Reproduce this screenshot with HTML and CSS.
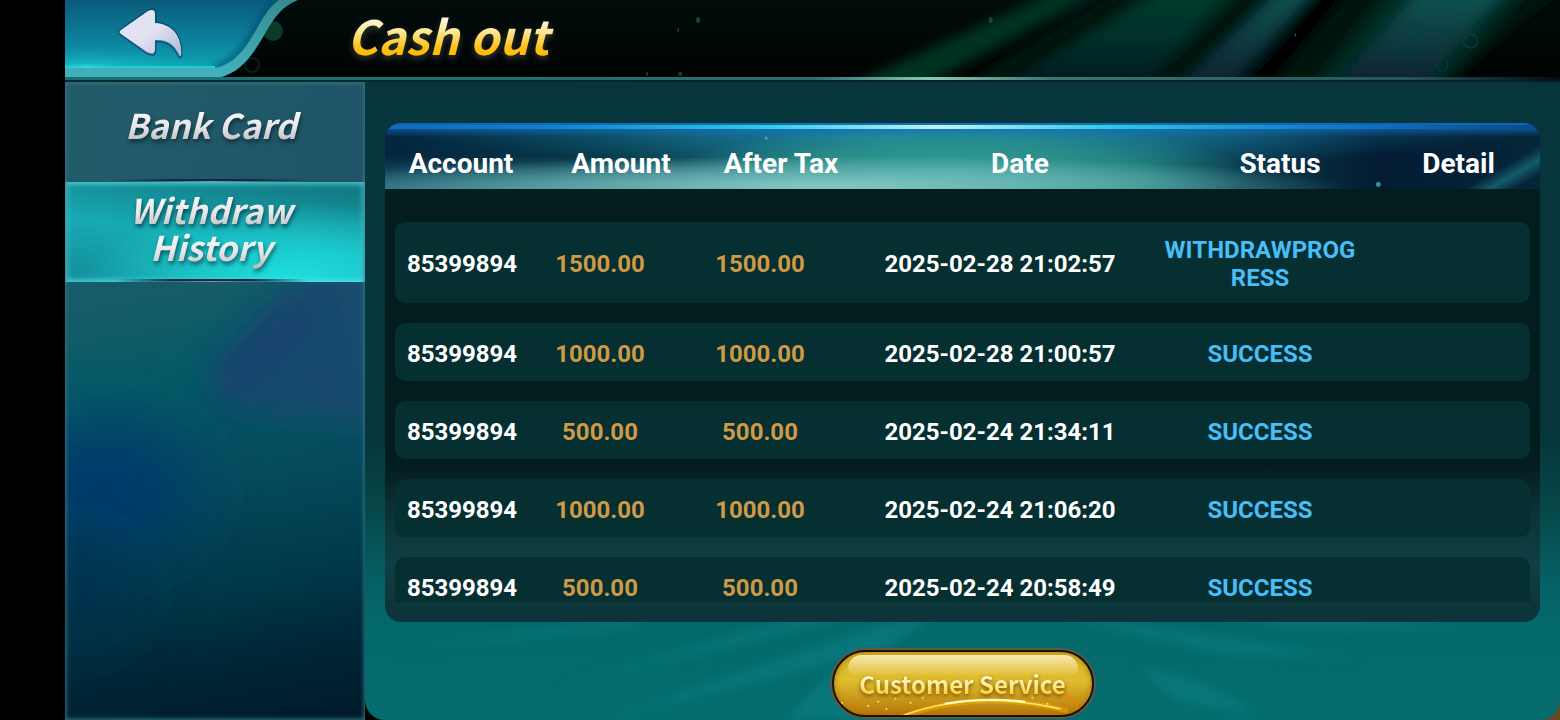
FILE: index.html
```
<!DOCTYPE html>
<html lang="en">
<head>
    <meta charset="UTF-8">
    <meta name="viewport" content="width=device-width, initial-scale=1.0">
    <title>Cash out</title>
    <link rel="stylesheet" href="styles.css">
</head>
<body>
    <header class="topbar">
        <svg class="rays" viewBox="0 0 940 78" preserveAspectRatio="none" aria-hidden="true">
            <defs>
                <filter id="soft" x="-20%" y="-20%" width="140%" height="140%"><feGaussianBlur stdDeviation="9 4"/></filter>
                <linearGradient id="ray" x1="0" y1="0" x2="0" y2="1">
                    <stop offset="0" stop-color="#053a2c"/>
                    <stop offset=".5" stop-color="#053029"/>
                    <stop offset="1" stop-color="#041820"/>
                </linearGradient>
                <linearGradient id="rayBlue" x1="0" y1="0" x2="0" y2="1">
                    <stop offset="0" stop-color="#0c5654"/>
                    <stop offset="1" stop-color="#07202f"/>
                </linearGradient>
            </defs>
            <g filter="url(#soft)">
                <polygon points="500,-10 940,-10 820,88 340,88" fill="#02140f"/>
                <polygon points="440,-10 484,-10 300,88 225,88" fill="#043020"/>
                <polygon points="540,-10 618,-10 520,88 385,88" fill="url(#ray)"/>
                <polygon points="662,-10 694,-10 608,88 558,88" fill="url(#rayBlue)"/>
                <polygon points="698,-10 730,-10 650,88 620,88" fill="#000605"/>
                <polygon points="770,-10 905,-10 820,88 695,88" fill="#042a24"/>
                <polygon points="800,-10 885,-10 800,88 715,88" fill="url(#rayBlue)"/>
            </g>
            <g fill="#0e4a35">
                <ellipse cx="80" cy="20" rx="2" ry="3"/>
                <ellipse cx="60" cy="30" rx="1" ry="2"/>
                <ellipse cx="372" cy="20" rx="2" ry="3"/>
                <ellipse cx="29" cy="74" rx="1" ry="2"/>
                <ellipse cx="62" cy="74" rx="2" ry="2"/>
                <ellipse cx="676" cy="35" rx="1" ry="2"/>
            </g>
            <g fill="none" stroke="#0d4247">
                <ellipse cx="798" cy="30" rx="7" ry="8"/>
                <ellipse cx="851" cy="41" rx="7" ry="7"/>
                <ellipse cx="823" cy="65" rx="5" ry="7" opacity=".6"/>
            </g>
        </svg>
        <button class="back" type="button" aria-label="Back">
            <svg width="240" height="78" viewBox="0 0 240 78" aria-hidden="true">
                <defs>
                    <linearGradient id="tab" x1="0" y1="0" x2="0" y2="1">
                        <stop offset="0" stop-color="#0a5b7b"/>
                        <stop offset=".6" stop-color="#0c829c"/>
                        <stop offset="1" stop-color="#10a5b3"/>
                    </linearGradient>
                    <linearGradient id="edge" x1="0" y1="0" x2="0" y2="1">
                        <stop offset="0" stop-color="#378b90"/>
                        <stop offset="1" stop-color="#42b2bd"/>
                    </linearGradient>
                    <linearGradient id="arrow" x1="0" y1="0" x2="1" y2="1">
                        <stop offset="0" stop-color="#dfe5f2"/>
                        <stop offset=".5" stop-color="#e2e2f2"/>
                        <stop offset="1" stop-color="#a9b9d8"/>
                    </linearGradient>
                    <radialGradient id="glow">
                        <stop offset="0" stop-color="#9cfcff"/>
                        <stop offset=".3" stop-color="#21dce6" stop-opacity=".6"/>
                        <stop offset="1" stop-color="#16c5cf" stop-opacity="0"/>
                    </radialGradient>
                    <clipPath id="tabShape"><path d="M0 0H214C202 8 196 22 185 40C174 57 164 65 150 68H0Z"/></clipPath>
                    <filter id="dim"><feGaussianBlur stdDeviation="3"/></filter>
                </defs>
                <circle cx="208" cy="31" r="10" fill="#0a3a29"/>
                <circle cx="187" cy="65" r="7" fill="none" stroke="#072018" stroke-width="2"/>
                <path d="M0 0H233C217 6 210 17 202 30C187 57 176 72 153 78H0Z" fill="url(#edge)"/>
                <g clip-path="url(#tabShape)">
                    <rect width="240" height="68" fill="url(#tab)"/>
                    <path d="M214 0C202 8 196 22 185 40C174 57 164 65 150 68" fill="none" stroke="#064a70" stroke-width="9" opacity=".6" filter="url(#dim)"/>
                    <ellipse cx="22" cy="68" rx="120" ry="18" fill="url(#glow)" opacity=".5"/>
                    <path d="M0 67H150" stroke="#20cedb" stroke-width="2"/>
                    <ellipse cx="22" cy="67" rx="32" ry="2" fill="url(#glow)"/>
                </g>
                <path d="M56 30Q53 32 56 34L82 53Q90 57 90 50V41C102 40 110 46 114 56Q117 60 116 50C115 35 106 24 90 23V14Q90 8 83 11Z" fill="#063b58" opacity=".6" stroke="#063b58" stroke-width="3"/>
                <path d="M56 30Q53 32 56 34L82 53Q90 57 90 50V41C102 40 110 46 114 56Q117 60 116 50C115 35 106 24 90 23V14Q90 8 83 11Z" fill="#4769ad"/>
                <path d="M56 30Q53 32 56 34L82 52Q90 56 90 49V40C102 39 110 45 114 55Q117 59 116 49C115 34 106 24 90 23V14Q90 8 83 11Z" fill="url(#arrow)"/>
            </svg>
        </button>
        <h1 class="title">Cash out</h1>
    </header>

    <div class="layout">
        <nav class="sidebar">
            <svg class="sidebar-art" viewBox="0 0 300 638" preserveAspectRatio="none" aria-hidden="true">
                <defs>
                    <filter id="haze" x="-100%" y="-100%" width="300%" height="300%"><feGaussianBlur stdDeviation="34"/></filter>
                    <filter id="haze2" x="-50%" y="-50%" width="200%" height="200%"><feGaussianBlur stdDeviation="14"/></filter>
                </defs>
                <ellipse cx="40" cy="405" rx="90" ry="65" fill="#003a6c" filter="url(#haze)"/>
                <ellipse cx="10" cy="510" rx="60" ry="50" fill="#002a4c" opacity=".7" filter="url(#haze)"/>
                <path d="M250 180L140 290L160 325L310 345V180Z" fill="#1f4770" opacity=".8" filter="url(#haze2)"/>
                <path d="M235 205L150 290L175 318L250 245Z" fill="#163c70" opacity=".6" filter="url(#haze2)"/>
                <path d="M300 205L150 358M248 200L112 355" stroke="#2d6577" stroke-width="1" opacity=".25"/>
            </svg>
            <a class="tab" href="#bank-card"><span>Bank Card</span></a>
            <a class="tab active" href="#history" aria-current="page"><span>Withdraw<br>History</span></a>
        </nav>

        <main class="panel">
            <svg class="streaks" viewBox="0 0 1195 180" preserveAspectRatio="none" aria-hidden="true">
                <defs>
                    <filter id="streak" x="-20%" y="-50%" width="140%" height="200%"><feGaussianBlur stdDeviation="6"/></filter>
                </defs>
                <g fill="#108a90" filter="url(#streak)" opacity=".4">
                    <path d="M180 150L560 40L580 55Z"/>
                    <path d="M230 182L590 60L520 110Z"/>
                    <path d="M20 110L300 72L260 88Z"/>
                    <path d="M620 60L1000 120L850 112Z"/>
                    <path d="M700 50L1130 90L930 88Z"/>
                    <path d="M420 180L470 130L520 180Z"/>
                    <path d="M770 125L830 140L900 176L810 160Z"/>
                </g>
            </svg>
            <table class="history">
                <thead>
                    <tr>
                        <th scope="col">Account</th>
                        <th scope="col">Amount</th>
                        <th scope="col">After Tax</th>
                        <th scope="col">Date</th>
                        <th scope="col">Status</th>
                        <th scope="col">Detail</th>
                    </tr>
                </thead>
                <tbody>
                    <tr>
                        <td>85399894</td>
                        <td class="money">1500.00</td>
                        <td class="money">1500.00</td>
                        <td>2025-02-28 21:02:57</td>
                        <td class="status">WITHDRAWPROGRESS</td>
                        <td></td>
                    </tr>
                    <tr>
                        <td>85399894</td>
                        <td class="money">1000.00</td>
                        <td class="money">1000.00</td>
                        <td>2025-02-28 21:00:57</td>
                        <td class="status">SUCCESS</td>
                        <td></td>
                    </tr>
                    <tr>
                        <td>85399894</td>
                        <td class="money">500.00</td>
                        <td class="money">500.00</td>
                        <td>2025-02-24 21:34:11</td>
                        <td class="status">SUCCESS</td>
                        <td></td>
                    </tr>
                    <tr>
                        <td>85399894</td>
                        <td class="money">1000.00</td>
                        <td class="money">1000.00</td>
                        <td>2025-02-24 21:06:20</td>
                        <td class="status">SUCCESS</td>
                        <td></td>
                    </tr>
                    <tr>
                        <td>85399894</td>
                        <td class="money">500.00</td>
                        <td class="money">500.00</td>
                        <td>2025-02-24 20:58:49</td>
                        <td class="status">SUCCESS</td>
                        <td></td>
                    </tr>
                </tbody>
            </table>
            <button class="service" type="button">
                <svg class="spark" viewBox="0 0 256 62" preserveAspectRatio="none" aria-hidden="true">
                    <path d="M62 66Q140 35 232 58" fill="none" stroke="#ffb400" stroke-width="5" opacity=".4"/>
                    <path d="M70 62Q140 37 225 56" fill="none" stroke="#ffe75a" stroke-width="1.5"/>
                    <path d="M110 51Q150 44 190 49" fill="none" stroke="#fffbd0" stroke-width="2"/>
                    <path d="M225 38Q238 46 244 58" fill="none" stroke="#ff7a00" stroke-width="2" opacity=".6"/>
                    <g fill="#ffe860">
                        <circle cx="8" cy="50" r="1"/><circle cx="34" cy="53" r="1"/><circle cx="44" cy="49" r="1"/>
                        <circle cx="61" cy="46" r="1"/><circle cx="52" cy="56" r="1"/><circle cx="76" cy="50" r="1"/>
                        <circle cx="88" cy="45" r="1"/><circle cx="197" cy="45" r="1"/><circle cx="212" cy="51" r="1"/>
                    </g>
                </svg>
                <span>Customer Service</span>
            </button>
        </main>
    </div>
</body>
</html>
```
FILE: styles.css
```
* {
    box-sizing: border-box;
}
body {
    display: flex;
    flex-direction: column;
    height: 100vh;
    margin: 0;
    padding-left: 65px;
    background-color: #000;
    color: #fff;
    font-family: Roboto, "Liberation Sans", sans-serif;
    overflow: hidden;
}

/* top bar */
.topbar {
    position: relative;
    display: flex;
    align-items: flex-start;
    gap: 42px;
    height: 82px;
    flex-shrink: 0;
    background: linear-gradient(#010d0b, #000302);
}
.topbar::after {
    content: "";
    position: absolute;
    left: 0;
    right: 0;
    bottom: 0;
    height: 5px;
    background:
        linear-gradient(90deg, #1b6f70, #2d6c6c 50%, #8ac7b4 58%, #3c7672 66%, #275457 90%, #030c12) top / 100% 3px no-repeat,
        linear-gradient(90deg, #022b2c, #021c2e);
}
.rays {
    position: absolute;
    top: 0;
    right: 0;
    width: 63%;
    height: 78px;
}
.back {
    position: relative;
    padding: 0;
    border: none;
    background: none;
    cursor: pointer;
}
.back svg {
    display: block;
}
.title {
    position: relative;
    margin: 0;
    padding: 0 8px 0 0;
    font-family: "Noto Sans CJK SC", sans-serif;
    font-size: 47px;
    font-style: italic;
    font-weight: 700;
    line-height: 69px;
    background: linear-gradient(#fffbe0 25%, #ffe89a 45%, #ffc21a 68%, #ffba00 80%);
    background-clip: text;
    -webkit-background-clip: text;
    color: transparent;
    filter: drop-shadow(0 3px 3px rgba(255, 255, 255, 0.2));
}

/* page body */
.layout {
    display: flex;
    flex: 1;
    min-height: 0;
    background: linear-gradient(90deg, #000 80%, #6b4a1e);
}
.sidebar {
    position: relative;
    width: 300px;
    flex-shrink: 0;
    background: linear-gradient(170deg, #1f5b69 0%, #175b68 32%, #045b66 46%, #054a5c 62%, #003a4a 76%, #002434 90%, #001a28);
    overflow: hidden;
}
.sidebar::after {
    content: "";
    position: absolute;
    inset: 0;
    box-shadow: inset 0 0 4px 1px #35778a;
    pointer-events: none;
}
.sidebar-art {
    position: absolute;
    inset: 0;
    width: 100%;
    height: 100%;
}
.tab {
    position: relative;
    display: flex;
    align-items: center;
    justify-content: center;
    height: 100px;
    padding: 0 8px 12px 0;
    text-align: center;
    text-decoration: none;
    background: linear-gradient(100deg, #225c69, #1f5567);
}
.tab::after {
    content: "";
    position: absolute;
    left: 50px;
    right: 56px;
    bottom: 0;
    height: 3px;
    background:
        linear-gradient(90deg, transparent, #7c94a8 50%, transparent) bottom / 100% 1px no-repeat,
        linear-gradient(90deg, transparent, #082c46 30%, #082c46 70%, transparent);
}
.tab.active {
    padding-bottom: 4px;
    background:
        radial-gradient(ellipse 70% 80% at 75% 100%, #20e0e0 0%, rgba(28, 216, 216, 0.7) 45%, transparent),
        linear-gradient(8deg, #14929f 10%, #17aab3 45%, #137c86 90%);
    box-shadow: inset 0 0 6px 1px #5ee6e8;
}
.tab span {
    padding: 0 6px 4px;
    font-family: "Noto Sans CJK SC", sans-serif;
    font-size: 34px;
    font-style: italic;
    font-weight: 700;
    line-height: 37px;
    background: linear-gradient(#fff, #e4e4e6 60%, #b9b9bc) top / 100% 37px;
    background-clip: text;
    -webkit-background-clip: text;
    color: transparent;
    filter: drop-shadow(1px 3px 2px rgba(0, 20, 30, 0.6));
}
.tab.active span {
    background: linear-gradient(#fff, #e4e4e6 60%, #b9b9bc) top / 100% 39px;
    background-clip: text;
    -webkit-background-clip: text;
}

.panel {
    position: relative;
    display: flex;
    flex: 1;
    flex-direction: column;
    align-items: center;
    min-width: 0;
    padding: 41px 20px 3px;
    border-radius: 0 0 20px 20px;
    background: linear-gradient(#07353c 0%, #07363d 56%, #06484a 67%, #056063 78%, #04696b 86%, #056c6e);
}
.streaks {
    position: absolute;
    left: 0;
    bottom: 0;
    width: 100%;
    height: 180px;
}

/* history table */
.history {
    position: relative;
    display: flex;
    flex: 1;
    flex-direction: column;
    width: 100%;
    min-height: 0;
    padding-bottom: 20px;
    border-radius: 16px;
    background: linear-gradient(#031c1e 0%, #031c1e 68%, #0b3237 78%, #103e44 88%, #0c3337);
    overflow: hidden;
}
.history tr {
    display: grid;
    align-items: center;
    text-align: center;
}
.history thead {
    display: block;
    height: 66px;
    flex-shrink: 0;
    background:
        linear-gradient(90deg, #1068c0, #1184d0 15%, #30cbe5 33%, #c4f3ee 48%, #35cbe2 62%, #127fcd 80%, #0a4890) 0 2px / 100% 4px no-repeat,
        linear-gradient(rgba(14, 110, 190, 0.9) 10%, transparent) 0 0 / 100% 14px no-repeat,
        radial-gradient(circle at 33% 23%, #4da7a8 0 1px, transparent 2px),
        radial-gradient(circle at 86% 93%, #349099 0 2px, transparent 3px),
        linear-gradient(150deg, transparent 94%, rgba(24, 115, 125, 0.7) 96%, transparent 98%),
        radial-gradient(ellipse 45% 45% at 38% 95%, #83c8c5, rgba(120, 190, 190, 0.6) 50%, transparent),
        radial-gradient(ellipse 25% 75% at 50% 75%, #36a297, rgba(44, 150, 138, 0.7) 60%, transparent),
        radial-gradient(ellipse 70% 60% at 15% 110%, rgba(60, 150, 160, 0.8), transparent),
        radial-gradient(ellipse 50% 70% at 50% 0, rgba(30, 145, 200, 0.8), transparent),
        linear-gradient(90deg, #04253f, #073a49 20%, #1a6b78 45%, #0d5060 66%, #031c33 86%, #06263a);
}
.history thead tr {
    grid-template-columns: 152fr 168fr 152fr 326fr 194fr 163fr;
    height: 66px;
    padding-top: 16px;
}
.history th,
.history td {
    min-width: 0;
    padding: 0;
    font-weight: 700;
}
.history th {
    font-size: 28px;
    line-height: 32px;
}
.history tbody {
    display: flex;
    flex: 1;
    flex-direction: column;
    gap: 20px;
    min-height: 0;
    margin: 33px 10px 0;
    overflow-y: auto;
    scrollbar-width: none;
}
.history tbody tr {
    grid-template-columns: 134fr 142fr 178fr 302fr 218fr 161fr;
    flex-shrink: 0;
    min-height: 58px;
    padding: 14px 0 11px;
    border-radius: 10px;
    background-color: #052f31;
}
.history td {
    font-size: 24px;
    line-height: 28px;
}
.history .money {
    color: #cf9a45;
}
.history .status {
    padding: 0 10px;
    color: #48bdf7;
    word-break: break-all;
}

.service {
    position: relative;
    width: 262px;
    height: 67px;
    flex-shrink: 0;
    margin-top: 28px;
    padding: 0;
    border: 2px solid #1c1204;
    border-radius: 34px;
    background:
        linear-gradient(#d9b02c, #e0be2e 45%, #c8971a 75%, #b87608);
    box-shadow: 0 0 0 2px #5e5a48, inset 0 0 6px #a8740a;
    cursor: pointer;
    overflow: hidden;
}
.service::before {
    content: "";
    position: absolute;
    top: 3px;
    left: 14px;
    right: 14px;
    height: 20px;
    border-radius: 16px 16px 8px 8px;
    background: linear-gradient(rgba(255, 246, 200, 0.85), rgba(255, 240, 170, 0.1));
}
.spark {
    position: absolute;
    inset: 0;
    width: 100%;
    height: 100%;
}
.service span {
    position: relative;
    display: block;
    font-family: "Noto Sans CJK SC", sans-serif;
    font-size: 24px;
    font-weight: 700;
    line-height: 60px;
    background: linear-gradient(#fffce0 30%, #ffee9c 50%, #ffc91e 70%);
    background-clip: text;
    -webkit-background-clip: text;
    color: transparent;
    filter: drop-shadow(0 2px 2px rgba(90, 50, 0, 0.8));
}
```
